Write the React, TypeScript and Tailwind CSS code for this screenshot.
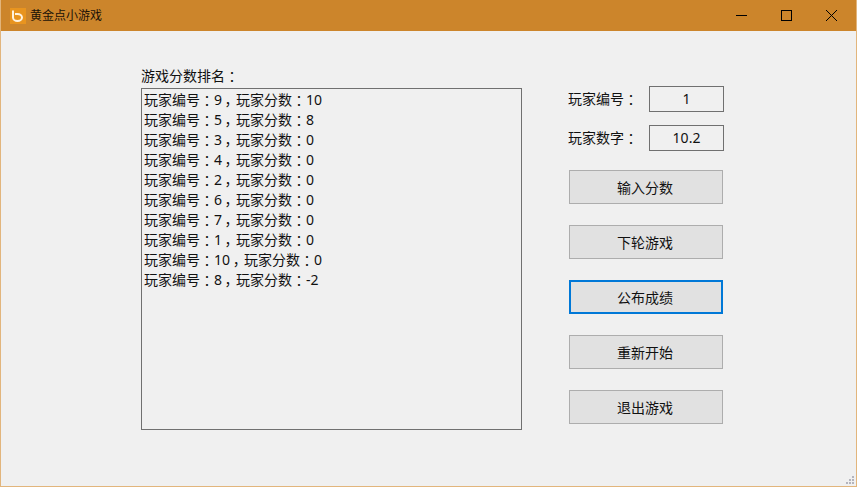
const scores = [
  '玩家编号：9，玩家分数：10',
  '玩家编号：5，玩家分数：8',
  '玩家编号：3，玩家分数：0',
  '玩家编号：4，玩家分数：0',
  '玩家编号：2，玩家分数：0',
  '玩家编号：6，玩家分数：0',
  '玩家编号：7，玩家分数：0',
  '玩家编号：1，玩家分数：0',
  '玩家编号：10，玩家分数：0',
  '玩家编号：8，玩家分数：-2',
];

const fontStack = "font-['Noto_Sans','Noto_Sans_CJK_SC',sans-serif]";

// the font sets ：and ，to the left of their cell, the reference has them centred
const Text = ({ value }: { value: string }) => (
  <>
    {value.split(/([：，])/).map((part, i) =>
      part === '：' || part === '，' ? (
        <span key={i} className="inline-block w-[14px] text-center [font-feature-settings:'palt']">
          {part}
        </span>
      ) : (
        part
      ),
    )}
  </>
);

const Field = ({ label, value }: { label: string; value: string }) => (
  <div className="-ml-px flex h-[26px] items-center">
    <span className="w-[81px] text-[14px] leading-5 text-[#111]">
      <Text value={label} />
    </span>
    <div className="flex h-[26px] w-[75px] items-center justify-center border border-[#707070] pb-[2px] text-[14px] text-[#111]">
      {value}
    </div>
  </div>
);

const GameButton = ({ label, focused }: { label: string; focused?: boolean }) => (
  <button
    className={
      focused
        ? 'h-[34px] w-[154px] border-2 border-[#0078d7] bg-[#e1e1e1] pr-[2px] text-[14px] text-[#111]'
        : 'h-[34px] w-[154px] border border-[#adadad] bg-[#e1e1e1] pr-[2px] text-[14px] text-[#111]'
    }
  >
    {label}
  </button>
);

export default function App() {
  return (
    <div className={`relative flex h-[487px] w-[857px] flex-col overflow-hidden border border-t-0 border-[#e2b57c] bg-[#f0f0f0] ${fontStack}`}>
      <div className="flex h-[31px] shrink-0 items-center bg-[#cc852b]">
        <svg className="ml-[9px] h-4 w-4" viewBox="0 0 16 16">
          <rect width="16" height="16" fill="#e8941f" />
          <path d="M3 2.5 L3 9.5 A4.5 3.5 0 1 0 7.5 6 L5 6" fill="none" stroke="#fff3df" strokeWidth="2" />
        </svg>
        <span className="ml-[4px] text-[12px] text-[#1a1208]">黄金点小游戏</span>
        <div className="ml-auto mr-[2px] flex h-full">
          <div className="flex h-full w-[45px] items-center justify-center">
            <svg className="h-[11px] w-[11px]" viewBox="0 0 11 11">
              <path d="M0 5.5 H11" stroke="#000" strokeWidth="1" />
            </svg>
          </div>
          <div className="flex h-full w-[45px] items-center justify-center">
            <svg className="h-[11px] w-[11px]" viewBox="0 0 11 11">
              <rect x="0.5" y="0.5" width="10" height="10" fill="none" stroke="#000" strokeWidth="1" />
            </svg>
          </div>
          <div className="flex h-full w-[45px] items-center justify-center">
            <svg className="h-[11px] w-[11px]" viewBox="0 0 11 11">
              <path d="M0 0 L11 11 M11 0 L0 11" stroke="#000" strokeWidth="1" />
            </svg>
          </div>
        </div>
      </div>
      <div className="flex flex-1 pl-[140px]">
        <div className="flex w-[381px] flex-col pt-[35px]">
          <div className="h-[22px] text-[14px] leading-5 text-[#111]">
            <Text value="游戏分数排名：" />
          </div>
          <div className="h-[342px] border border-[#707070] bg-[#f0f0f0] pl-[2px] pt-[1px]">
            {scores.map((s) => (
              <div key={s} className="h-5 text-[14px] leading-5 text-[#111]">
                <Text value={s} />
              </div>
            ))}
          </div>
        </div>
        <div className="ml-[47px] flex flex-col pt-[55px]">
          <div className="flex flex-col gap-[13px]">
            <Field label="玩家编号：" value="1" />
            <Field label="玩家数字：" value="10.2" />
          </div>
          <div className="mt-[19px] flex flex-col gap-[21px]">
            <GameButton label="输入分数" />
            <GameButton label="下轮游戏" />
            <GameButton label="公布成绩" focused />
            <GameButton label="重新开始" />
            <GameButton label="退出游戏" />
          </div>
        </div>
      </div>
      {/* size grip */}
      <svg className="absolute bottom-px right-px h-[10px] w-[10px]" viewBox="0 0 10 10" fill="#b4b4bc">
        <rect x="7" y="1" width="2" height="2" />
        <rect x="4" y="4" width="2" height="2" />
        <rect x="7" y="4" width="2" height="2" />
        <rect x="1" y="7" width="2" height="2" />
        <rect x="4" y="7" width="2" height="2" />
        <rect x="7" y="7" width="2" height="2" />
      </svg>
    </div>
  );
}
